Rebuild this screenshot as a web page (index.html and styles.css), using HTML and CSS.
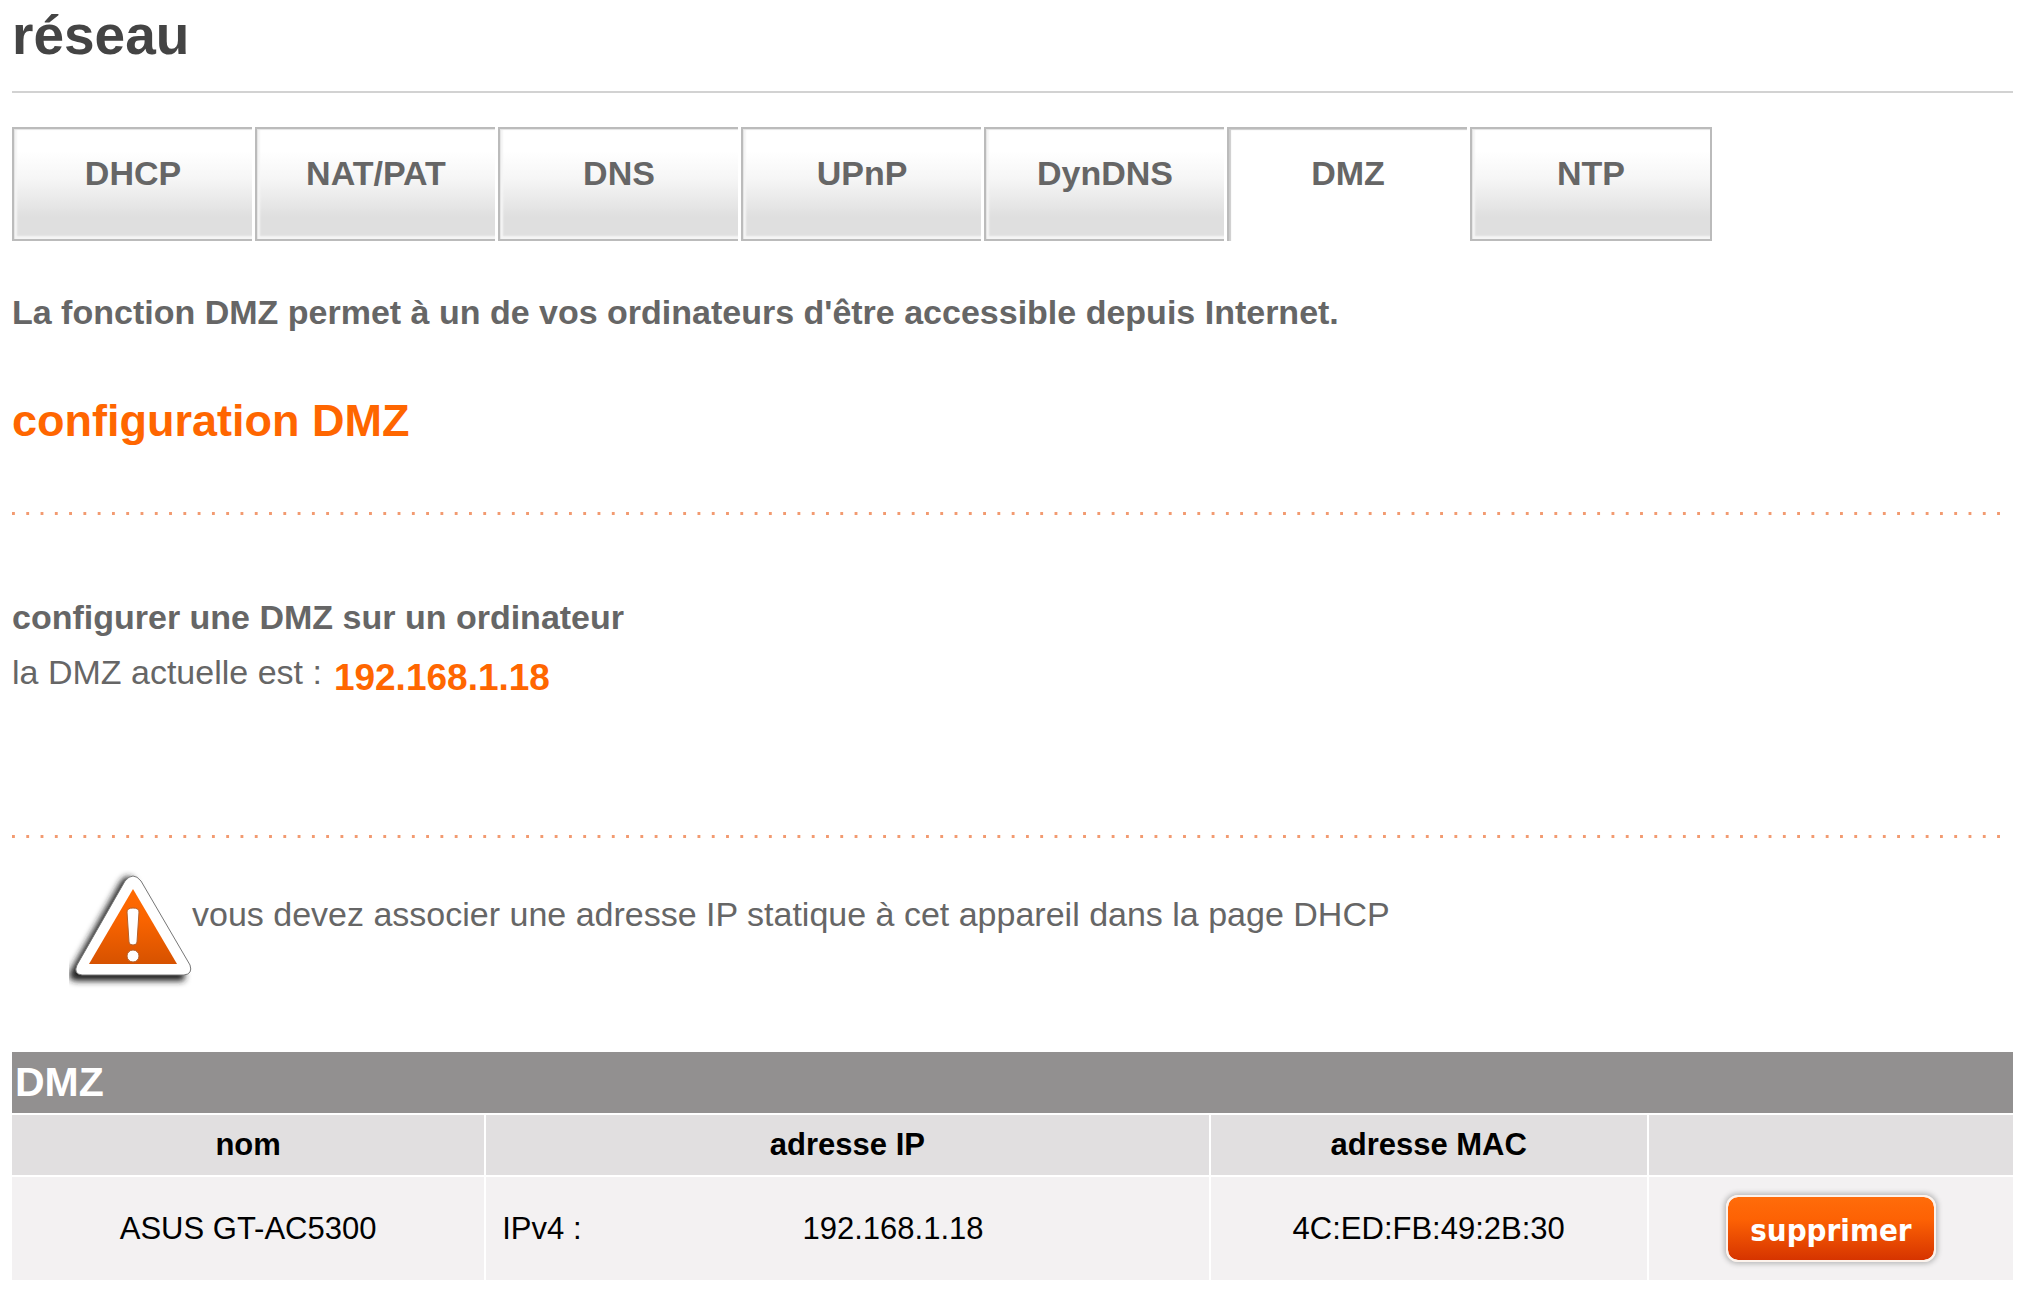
FILE: index.html
```html
<!DOCTYPE html>
<html lang="fr">
<head>
<meta charset="utf-8">
<title>réseau - DMZ</title>
<link rel="stylesheet" href="styles.css">
</head>
<body>
<header class="page-header">
  <h1 class="page-title">réseau</h1>
</header>
<nav class="tabs">
  <a class="tab" href="#dhcp">DHCP</a>
  <a class="tab" href="#natpat">NAT/PAT</a>
  <a class="tab" href="#dns">DNS</a>
  <a class="tab" href="#upnp">UPnP</a>
  <a class="tab" href="#dyndns">DynDNS</a>
  <a class="tab tab-active" href="#dmz" aria-current="page">DMZ</a>
  <a class="tab tab-last" href="#ntp">NTP</a>
</nav>
<main>
  <p class="intro">La fonction DMZ permet à un de vos ordinateurs d'être accessible depuis Internet.</p>
  <h2 class="section-title">configuration DMZ</h2>
  <div class="dots"></div>
  <section class="current">
    <h3 class="current-title">configurer une DMZ sur un ordinateur</h3>
    <div class="current-row">
      <span>la DMZ actuelle est :</span>
      <strong class="current-ip">192.168.1.18</strong>
    </div>
  </section>
  <div class="dots"></div>
  <div class="warning">
    <svg class="warning-icon" width="123" height="124" viewBox="0 0 123 124" aria-hidden="true">
      <defs>
        <linearGradient id="fill" x1="0" y1="0" x2="0" y2="1">
          <stop offset="0" stop-color="#ff6a00"/>
          <stop offset="0.4" stop-color="#fa6400"/>
          <stop offset="1" stop-color="#d65200"/>
        </linearGradient>
        <filter id="soft" x="-20%" y="-20%" width="140%" height="140%">
          <feGaussianBlur stdDeviation="3"/>
        </filter>
      </defs>
      <path d="M52 13 Q58 4 64 10 L114 103 Q117 110 111 110 L8 110 Q-1 110 2 102 Z" fill="#222" stroke="#222" stroke-width="2" filter="url(#soft)"/>
      <path d="M56 11 Q64 1 72 11 L121 95 Q124 104 115 105 L13 105 Q4 104 8 95 Z" fill="#fff" stroke="#777" stroke-width="1"/>
      <path d="M64 19 L108 94 L20 94 Z" fill="url(#fill)"/>
      <path d="M58 42 Q58 38 64 38 Q70 38 70 42 L68 72 Q68 75 64 75 Q60 75 60 72 Z" fill="#fff" stroke="#b5602a" stroke-width="1"/>
      <circle cx="64" cy="86" r="6" fill="#fff" stroke="#b5602a" stroke-width="1"/>
    </svg>
    <p class="warning-text">vous devez associer une adresse IP statique à cet appareil dans la page DHCP</p>
  </div>
  <table class="hosts">
    <colgroup><col class="col-name"><col class="col-ip"><col class="col-mac"><col class="col-action"></colgroup>
    <thead>
      <tr><th class="hosts-title" colspan="4">DMZ</th></tr>
      <tr class="hosts-head"><th>nom</th><th>adresse IP</th><th>adresse MAC</th><th></th></tr>
    </thead>
    <tbody>
      <tr class="hosts-row">
        <td>ASUS GT-AC5300</td>
        <td><div class="ip"><span>IPv4 :</span><span class="ip-value">192.168.1.18</span></div></td>
        <td>4C:ED:FB:49:2B:30</td>
        <td><button class="delete" type="button">supprimer</button></td>
      </tr>
    </tbody>
  </table>
</main>
</body>
</html>
```
FILE: styles.css
```css
* { box-sizing: border-box; }

body {
  margin: 0;
  padding: 4px 19px 16px 12px;
  background: #fff;
  color: #666;
  font: 34px/40px "Liberation Sans", Arial, sans-serif;
}

h1, h2, h3, p { margin: 0; }

.page-header {
  padding-bottom: 25px;
  border-bottom: 2px solid #d2d2d2;
}

.page-title {
  color: #444;
  font-size: 55px;
  line-height: 62px;
}

.tabs {
  display: flex;
  gap: 3px;
  margin-top: 34px;
}

.tab {
  flex: 0 1 240px;
  height: 114px;
  padding-top: 24px;
  border: 2px solid #bbb;
  border-right: 0;
  background: linear-gradient(#fff 20%, #f6f6f6 45%, #dfdfdf 80%);
  box-shadow: inset 1px 1px 1px #e4e4e4, inset 3px -3px 2px #f5f5f5;
  color: #666;
  font-weight: bold;
  text-align: center;
  text-decoration: none;
}

.tab-active {
  border-bottom: 0;
  background: #fff;
  box-shadow: inset 2px 1px 1px #ccc;
}

.tab-last {
  flex-basis: 242px;
  border-right: 2px solid #bbb;
}

.intro {
  margin-top: 51px;
  font-weight: bold;
}

.section-title {
  margin: 64px 0 66px;
  color: #f60;
  font-size: 45px;
  line-height: 50px;
}

.dots {
  height: 3px;
  padding-right: 8px;
  background: linear-gradient(90deg, #f29a70 3px, transparent 3px) 0 0 / calc(100% / 140) 3px;
  background-origin: border-box;
  background-clip: content-box;
}

.current { padding: 82px 0 131px; }

.current-title { font-size: 34px; }

.current-row {
  display: flex;
  gap: 12px;
  margin-top: 15px;
}

.current-ip {
  color: #f60;
  font-size: 37px;
  line-height: 52px;
}

.warning {
  display: flex;
  margin: 32px 0 58px;
  padding-left: 57px;
}

.warning-icon { flex: none; }

.warning-text { padding-top: 24px; }

.hosts {
  width: 100%;
  border-spacing: 0;
  table-layout: fixed;
  color: #000;
  font-size: 31px;
  line-height: 36px;
}

.col-name { width: 23.6%; }
.col-ip { width: 36.2%; }
.col-mac { width: 21.9%; }
.col-action { width: 18.3%; }

.hosts th, .hosts td {
  padding: 0;
  border-top: 2px solid #fff;
  border-left: 2px solid #fff;
  text-align: center;
}

.hosts th:first-child, .hosts td:first-child { border-left: 0; }

.hosts .hosts-title {
  height: 61px;
  padding: 0 3px 2px;
  border-top: 0;
  background: #929090;
  color: #fff;
  font-size: 41px;
  text-align: left;
}

.hosts-head th {
  height: 62px;
  background: #e1dfe0;
}

.hosts-row td {
  height: 105px;
  background: #f3f1f2;
}

.ip {
  display: flex;
  padding: 0 4px 0 16px;
}

.ip-value { flex: 1; }

.delete {
  display: block;
  width: 210px;
  height: 67px;
  margin: 0 auto;
  padding: 2px 0 0;
  border: 2px solid #fdf3ec;
  border-radius: 12px;
  background: linear-gradient(#ff6c0a, #fd6204 35%, #d63400) padding-box;
  box-shadow: 0 0 5px 2px #bbb;
  color: #fff;
  font: bold 31px/36px "DejaVu Sans Condensed", "Noto Sans", sans-serif;
}
```
